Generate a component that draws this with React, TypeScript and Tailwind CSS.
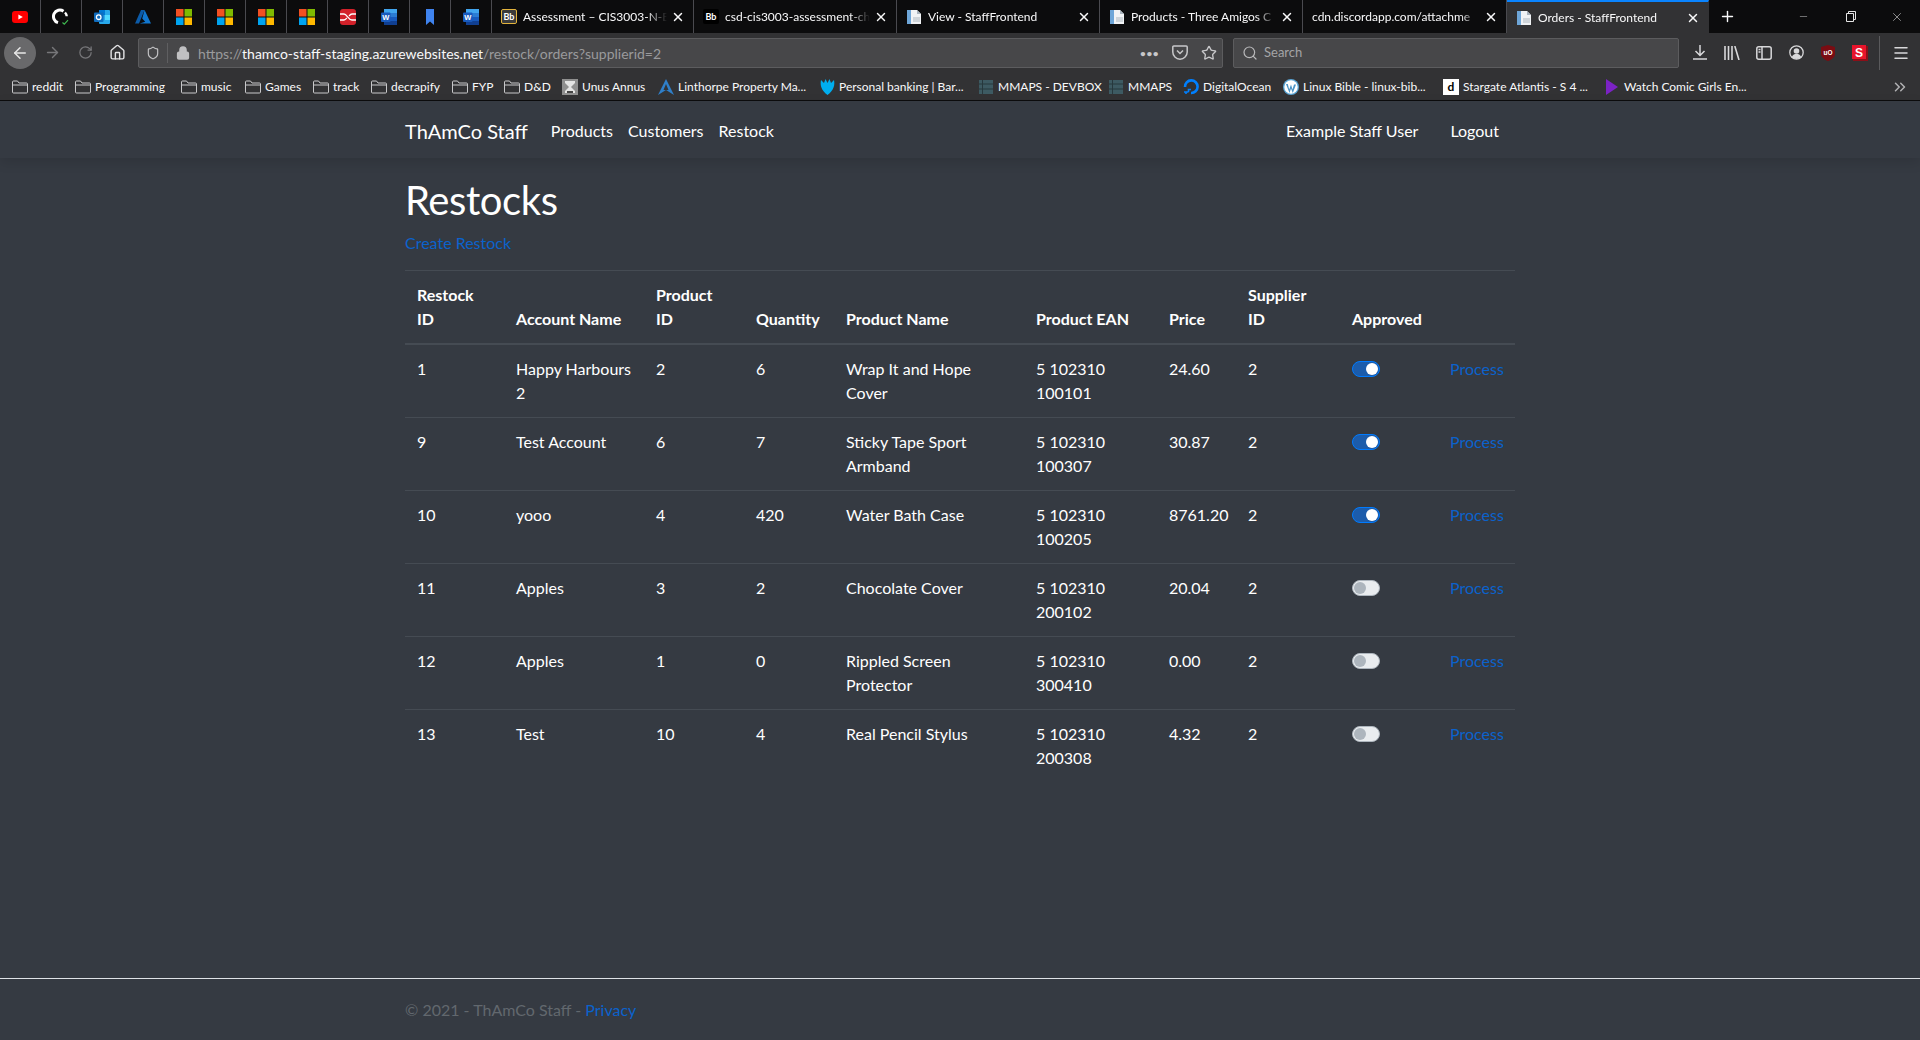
import { ArrowLeft, ArrowRight, ChevronsRight, Home, Lock, Menu, Minus, Plus, RotateCw, Search, Shield, Star, X } from 'lucide-react';
import type { ReactNode } from 'react';

const YouTube = () => (
  <svg width="16" height="12" viewBox="0 0 16 12">
    <rect width="16" height="12" rx="3" fill="#f00" />
    <path d="M6.4 3.4 10.8 6 6.4 8.6z" fill="#fff" />
  </svg>
);

const GitCheck = () => (
  <svg width="18" height="18" viewBox="0 0 18 18" fill="none">
    <path d="M11.5 3.2A6.4 6.4 0 1 0 6 14.6" stroke="#fff" strokeWidth="3" />
    <path d="M13 4.5c1.200 1.200 1.700 2.400 1.700 3.800" stroke="#fff" strokeWidth="2.400" />
    <path d="M10.500 14.500 12.300 16.200 16 12.200" stroke="#3fb950" strokeWidth="1.200" />
  </svg>
);

const Outlook = () => (
  <svg width="16" height="16" viewBox="0 0 16 16">
    <rect x="5" y="1" width="11" height="14" rx="1" fill="#28a8ea" />
    <rect x="5" y="1" width="6" height="5" fill="#0078d4" />
    <rect x="11" y="6" width="5" height="5" fill="#50d9ff" />
    <rect y="3.500" width="9.500" height="9.500" rx="1" fill="#0f6cbd" />
    <circle cx="4.700" cy="8.200" r="2.300" fill="none" stroke="#fff" strokeWidth="1.300" />
  </svg>
);

const Azure = () => (
  <svg width="16" height="14" viewBox="0 0 16 14">
    <path d="M6 0h3.600L4 13.500H0z" fill="#0c5ba8" />
    <path d="M9.600 0 16 13.500H4.800l5.400-1.700-3-3.400z" fill="#1177cf" />
  </svg>
);

const Microsoft = () => (
  <svg width="16" height="16" viewBox="0 0 16 16">
    <rect width="7.500" height="7.500" fill="#f25022" />
    <rect x="8.500" width="7.500" height="7.500" fill="#7fba00" />
    <rect y="8.500" width="7.500" height="7.500" fill="#00a4ef" />
    <rect x="8.500" y="8.500" width="7.500" height="7.500" fill="#ffb900" />
  </svg>
);

const RedSwitch = () => (
  <svg width="16" height="16" viewBox="0 0 16 16" fill="none">
    <rect width="16" height="16" rx="3" fill="#d3212a" />
    <path d="M0 5h4c3 0 4 6 8 6h4M0 11h4c1.500 0 2-1 2.800-2M9 7c.8-1 1.500-2 3-2h4" stroke="#fff" strokeWidth="1.300" />
  </svg>
);

const Word = () => (
  <svg width="16" height="16" viewBox="0 0 16 16">
    <rect x="3" y="0" width="13" height="16" rx="1" fill="#2b7cd3" />
    <rect x="3" y="0" width="13" height="4" fill="#41a5ee" />
    <rect x="3" y="8" width="13" height="4" fill="#185abd" />
    <rect x="3" y="12" width="13" height="4" fill="#103f91" />
    <rect x="0" y="3.500" width="9.500" height="9.500" rx="1" fill="#185abd" />
    <text x="4.700" y="11" fontSize="7.500" fontWeight="700" fill="#fff" textAnchor="middle" fontFamily="Liberation Sans">W</text>
  </svg>
);

const BookmarkBlue = () => (
  <svg width="8" height="16" viewBox="0 0 8 16">
    <path d="M0 0h8v16L4 12.500 0 16z" fill="#3f83ee" />
  </svg>
);

const Blackboard = ({ framed }: { framed?: boolean }) => (
  <div className={`flex h-[15px] w-[16px] items-center justify-center rounded-[2px] text-[9px] font-bold text-white ${framed ? 'border border-[#e2b33c] bg-[#3a3a3a]' : 'bg-black'}`}>
    Bb
  </div>
);

const Page = () => (
  <svg width="16" height="16" viewBox="0 0 16 16">
    <path d="M1 1h10l4 4v10H1z" fill="#f1f3f5" />
    <path d="M1 1h4v14H1z" fill="#6ea6d8" />
    <path d="M11 1l4 4h-4z" fill="#a9b4be" />
    <path d="M7 8h7v5H7z" fill="#cfd5da" />
  </svg>
);

const Folder = () => (
  <svg width="16" height="14" viewBox="0 0 16 14" fill="none" className="shrink-0">
    <path d="M.5 12V2A1 1 0 0 1 1.500 1h4l1.500 2h7.500a1 1 0 0 1 1 1v8a1 1 0 0 1-1 1h-13a1 1 0 0 1-1-1zM.5 5h15" stroke="#c8c8ca" />
  </svg>
);

const Hourglass = () => (
  <svg width="16" height="16" viewBox="0 0 16 16" className="shrink-0">
    <rect width="16" height="16" fill="#8f8f8f" />
    <path d="M3 2h10v2L9 8l4 4v2H3v-2l4-4-4-4z" fill="#e4e4e4" />
    <path d="M5 12h6v2H5z" fill="#444" />
  </svg>
);

const Linthorpe = () => (
  <svg width="16" height="16" viewBox="0 0 16 16" className="shrink-0">
    <path d="M8 0 16 16 8 11 0 16z" fill="#2f7fc9" />
    <path d="M8 5 10.500 11H5.500z" fill="#323234" />
  </svg>
);

const Eagle = () => (
  <svg width="15" height="16" viewBox="0 0 15 16" className="shrink-0">
    <path d="M1 1 4 4 5.500 0 7.500 4 9.500 0 11 4 14 1c1 5 0 10-6.500 15C1 11 0 6 1 1z" fill="#00aeef" />
  </svg>
);

const Mmaps = () => (
  <svg width="14" height="14" viewBox="0 0 14 14" className="shrink-0">
    <rect width="14" height="14" fill="#3d5a62" />
    <path d="M3.500 0v14M0 4h14M0 9h14" stroke="#27383d" />
  </svg>
);

const DigitalOcean = () => (
  <svg width="16" height="16" viewBox="0 0 16 16" fill="none" className="shrink-0">
    <path d="M8 14A6.300 6.300 0 1 0 2 8" stroke="#0080ff" strokeWidth="2.600" />
    <path d="M8 10.500H5.500V13M5.500 13H3v2M3 13H1" stroke="#0080ff" strokeWidth="1.600" />
  </svg>
);

const WordPress = () => (
  <svg width="16" height="16" viewBox="0 0 16 16" className="shrink-0">
    <circle cx="8" cy="8" r="8" fill="#5ba6d6" />
    <circle cx="8" cy="8" r="6.700" fill="#fff" />
    <path d="M3 5 6.500 14 8 9.500 9.800 14 13 5.500h-2l-1.500 5L8 5.500 6.200 10.500 4.800 5z" fill="#4a94c7" />
  </svg>
);

const DBadge = () => (
  <div className="flex h-4 w-4 shrink-0 items-center justify-center bg-white text-[12px] font-bold text-black">d</div>
);

const PurplePlay = () => (
  <svg width="12" height="16" viewBox="0 0 12 16" className="shrink-0">
    <path d="M0 0 12 8 0 16z" fill="#7b22c4" />
  </svg>
);

const pinned: ReactNode[] = [
  <YouTube />,
  <GitCheck />,
  <Outlook />,
  <Azure />,
  <Microsoft />,
  <Microsoft />,
  <Microsoft />,
  <Microsoft />,
  <RedSwitch />,
  <Word />,
  <BookmarkBlue />,
  <Word />,
];

const tabs = [
  { title: 'Assessment – CIS3003-N-BI', icon: <Blackboard framed />, w: 'w-[202px]', active: false },
  { title: 'csd-cis3003-assessment-ch', icon: <Blackboard />, w: 'w-[203px]', active: false },
  { title: 'View - StaffFrontend', icon: <Page />, w: 'w-[203px]', active: false },
  { title: 'Products - Three Amigos C', icon: <Page />, w: 'w-[203px]', active: false },
  { title: 'cdn.discordapp.com/attachme', icon: null, w: 'w-[204px]', active: false },
  { title: 'Orders - StaffFrontend', icon: <Page />, w: 'w-[202px]', active: true },
];

const bookmarks: { label: string; icon: ReactNode; w: string }[] = [
  { label: 'reddit', icon: <Folder />, w: 'w-[63px]' },
  { label: 'Programming', icon: <Folder />, w: 'w-[106px]' },
  { label: 'music', icon: <Folder />, w: 'w-[64px]' },
  { label: 'Games', icon: <Folder />, w: 'w-[68px]' },
  { label: 'track', icon: <Folder />, w: 'w-[58px]' },
  { label: 'decrapify', icon: <Folder />, w: 'w-[81px]' },
  { label: 'FYP', icon: <Folder />, w: 'w-[52px]' },
  { label: 'D&D', icon: <Folder />, w: 'w-[58px]' },
  { label: 'Unus Annus', icon: <Hourglass />, w: 'w-[96px]' },
  { label: 'Linthorpe Property Ma...', icon: <Linthorpe />, w: 'w-[161px]' },
  { label: 'Personal banking | Bar...', icon: <Eagle />, w: 'w-[159px]' },
  { label: 'MMAPS - DEVBOX', icon: <Mmaps />, w: 'w-[130px]' },
  { label: 'MMAPS', icon: <Mmaps />, w: 'w-[75px]' },
  { label: 'DigitalOcean', icon: <DigitalOcean />, w: 'w-[100px]' },
  { label: 'Linux Bible - linux-bib...', icon: <WordPress />, w: 'w-[160px]' },
  { label: 'Stargate Atlantis - S 4 ...', icon: <DBadge />, w: 'w-[161px]' },
  { label: 'Watch Comic Girls En...', icon: <PurplePlay />, w: 'w-[150px]' },
];

const rows = [
  { id: 1, account: 'Happy Harbours 2', product: 2, qty: 6, name: 'Wrap It and Hope Cover', ean: '5 102310 100101', price: '24.60', on: true },
  { id: 9, account: 'Test Account', product: 6, qty: 7, name: 'Sticky Tape Sport Armband', ean: '5 102310 100307', price: '30.87', on: true },
  { id: 10, account: 'yooo', product: 4, qty: 420, name: 'Water Bath Case', ean: '5 102310 100205', price: '8761.20', on: true },
  { id: 11, account: 'Apples', product: 3, qty: 2, name: 'Chocolate Cover', ean: '5 102310 200102', price: '20.04', on: false },
  { id: 12, account: 'Apples', product: 1, qty: 0, name: 'Rippled Screen Protector', ean: '5 102310 300410', price: '0.00', on: false },
  { id: 13, account: 'Test', product: 10, qty: 4, name: 'Real Pencil Stylus', ean: '5 102310 200308', price: '4.32', on: false },
];

function Toggle({ on }: { on: boolean }) {
  return (
    <div className={`mt-1 flex h-4 w-7 items-center rounded-full border px-[1px] ${on ? 'justify-end border-[#007bff] bg-[#1c5cab]' : 'justify-start border-[#adb5bd] bg-[#e9ecef]'}`}>
      <div className={`h-3 w-3 rounded-full ${on ? 'bg-white' : 'bg-[#adb5bd]'}`} />
    </div>
  );
}

function BrowserChrome() {
  return (
    <div className="shrink-0 text-[12px] text-[#f9f9fa]">
      <div className="flex h-[33px] items-stretch bg-[#0c0c0d]">
        {pinned.map((icon, i) => (
          <div key={i} className="flex w-[41px] items-center justify-center border-r border-[#4a4a4f]">
            {icon}
          </div>
        ))}
        {tabs.map((t) => (
          <div
            key={t.title}
            className={`flex items-center border-r pl-[9px] pr-2 ${t.w} ${t.active ? 'border-t-2 border-r-transparent border-t-[#0a84ff] bg-[#323234]' : 'border-[#4a4a4f]'}`}
          >
            {t.icon && <div className="mr-[6px] flex w-4 shrink-0 justify-center">{t.icon}</div>}
            <span className="flex-1 overflow-hidden whitespace-nowrap [mask-image:linear-gradient(to_left,transparent,black_20px)]">{t.title}</span>
            <X size={14} strokeWidth={2.5} className="ml-1 shrink-0" />
          </div>
        ))}
        <div className="flex w-[36px] items-center justify-center">
          <Plus size={17} strokeWidth={2} />
        </div>
        <div className="ml-auto flex items-center text-[#e6e6e6]">
          <div className="flex w-[47px] justify-center">
            <Minus size={11} strokeWidth={1} />
          </div>
          <div className="flex w-[47px] justify-center">
            <svg width="10" height="11" viewBox="0 0 10 11" fill="none" stroke="#e6e6e6">
              <path d="M.5 2.500h7v8h-7zM2.500 2.500v-2h7v8h-2" />
            </svg>
          </div>
          <div className="flex w-[46px] justify-center">
            <X size={14} strokeWidth={1} />
          </div>
        </div>
      </div>

      <div className="flex h-[39px] items-center bg-[#323234] text-[#b1b1b3]">
        <div className="ml-1 flex h-8 w-8 items-center justify-center rounded-full bg-[#69696b] text-[#e8e8e8]">
          <ArrowLeft size={18} strokeWidth={2} />
        </div>
        <div className="ml-[7px] flex w-[18px] justify-center text-[#77777a]">
          <ArrowRight size={17} strokeWidth={2} />
        </div>
        <div className="ml-[15px] flex w-[18px] justify-center text-[#77777a]">
          <RotateCw size={15} strokeWidth={2} />
        </div>
        <div className="ml-[14px] flex w-[18px] justify-center text-[#e2e2e4]">
          <Home size={17} strokeWidth={2} />
        </div>
        <div className="ml-[12px] flex h-[30px] w-[1085px] items-center rounded-[2px] border border-[#5c5c5e] bg-[#474749]">
          <div className="flex w-[28px] justify-center text-[#c4c4c6]">
            <Shield size={14} strokeWidth={2} />
          </div>
          <div className="h-5 w-px bg-[#5f5f61]" />
          <Lock size={14} strokeWidth={3} className="ml-[8px] text-[#c0c0c2]" fill="#c0c0c2" />
          <div className="ml-[8px] flex-1 whitespace-nowrap pt-px text-[14px] text-[#9a9a9c]">
            https://<span className="text-[#f9f9fa]">thamco-staff-staging.azurewebsites.net</span>/restock/orders?supplierid=2
          </div>
          <div className="flex items-center gap-[13px] pr-[5px] text-[#c8c8ca]">
            <span className="text-[10px] font-bold leading-none tracking-[0.5px]">•••</span>
            <svg width="16" height="15" viewBox="0 0 16 15" fill="none" stroke="#c8c8ca" strokeWidth="1.500">
              <path d="M1.800 1h12.400a1 1 0 0 1 1 1v5a7.200 7.200 0 0 1-14.400 0V2a1 1 0 0 1 1-1z" />
              <path d="M5 5.500 8 8.500 11 5.500" />
            </svg>
            <Star size={16} strokeWidth={2} />
          </div>
        </div>
        <div className="ml-[10px] flex h-[30px] w-[446px] items-center rounded-[2px] border border-[#5c5c5e] bg-[#474749] pl-2">
          <Search size={16} strokeWidth={1.800} className="text-[#b8b8ba]" />
          <span className="ml-[6px] pt-px text-[13px] text-[#a4a4a6]">Search</span>
        </div>
        <div className="ml-[5px] flex items-center text-[#d8d8da]">
          <div className="flex w-[32px] justify-center">
            <svg width="14" height="15" viewBox="0 0 14 15" fill="none" stroke="currentColor" strokeWidth="1.500">
              <path d="M7 0v10M2.500 6 7 10.500 11.500 6M0 14h14" />
            </svg>
          </div>
          <div className="flex w-[32px] justify-center">
            <svg width="16" height="14" viewBox="0 0 16 14" fill="none" stroke="currentColor" strokeWidth="1.600">
              <path d="M1 0v14M4.500 0v14M8 0v14M10.800 0 15 14" />
            </svg>
          </div>
          <div className="flex w-[32px] justify-center">
            <svg width="16" height="14" viewBox="0 0 16 14" fill="none" stroke="currentColor" strokeWidth="1.500">
              <rect x=".8" y=".8" width="14.400" height="12.400" rx="2" />
              <path d="M6 1v12M2.500 3.500h2M2.500 6h2" />
            </svg>
          </div>
          <div className="flex w-[32px] justify-center">
            <svg width="15" height="15" viewBox="0 0 15 15" fill="none">
              <circle cx="7.500" cy="7.500" r="6.700" stroke="currentColor" strokeWidth="1.300" />
              <circle cx="7.500" cy="6" r="2.800" fill="currentColor" />
              <path d="M2.800 12c1-2.500 2.800-3 4.700-3s3.700.5 4.700 3a6.500 6.500 0 0 1-9.400 0z" fill="currentColor" />
            </svg>
          </div>
          <div className="flex w-[32px] justify-center">
            <svg width="14" height="16" viewBox="0 0 14 16">
              <path d="M7 0 14 2v7c0 3-3 5.500-7 7-4-1.500-7-4-7-7V2z" fill="#7a0c12" />
              <text x="7" y="10" fontSize="6.500" fontWeight="700" fill="#fff" textAnchor="middle" fontFamily="Liberation Sans">uO</text>
            </svg>
          </div>
          <div className="flex w-[32px] justify-center">
            <svg width="16" height="16" viewBox="0 0 16 16">
              <rect x="1" y="1" width="15" height="15" fill="#8c0f18" />
              <rect width="14" height="14" fill="#e8142b" />
              <text x="7" y="11.500" fontSize="12" fontWeight="700" fill="#fff" textAnchor="middle" fontFamily="Liberation Sans">S</text>
            </svg>
          </div>
          <div className="ml-[3px] h-[34px] w-px bg-[#5a5a5c]" />
          <Menu size={18} strokeWidth={2} className="ml-[12px] text-[#d8d8da]" />
        </div>
      </div>

      <div className="flex h-[29px] items-center border-b border-[#0c0c0d] bg-[#323234] pl-3 pt-[2px]">
        {bookmarks.map((b) => (
          <div key={b.label} className={`flex items-center gap-1 whitespace-nowrap ${b.w}`}>
            <div className="flex w-4 justify-center">{b.icon}</div>
            <span>{b.label}</span>
          </div>
        ))}
        <ChevronsRight size={18} strokeWidth={2} className="ml-auto mr-[11px] text-[#b1b1b3]" />
      </div>
    </div>
  );
}

export default function App() {
  return (
    <div className="flex h-[1040px] flex-col overflow-hidden bg-[#353a42] font-['Lato',sans-serif] text-white">
      <BrowserChrome />

      <nav className="z-10 flex h-[57px] shrink-0 justify-center bg-[#353a42] shadow-[0_4px_12px_rgba(0,0,0,0.12)]">
        <div className="flex w-[1110px] items-center pt-[3px] text-[16px]">
          <a className="mr-[23px] text-[20px]">ThAmCo Staff</a>
          <div className="flex gap-[15px]">
            <a>Products</a>
            <a>Customers</a>
            <a>Restock</a>
          </div>
          <div className="ml-auto flex gap-8 pr-4">
            <a>Example Staff User</a>
            <a>Logout</a>
          </div>
        </div>
      </nav>

      <main className="flex flex-1 justify-center pt-[18px]">
        <div className="w-[1110px]">
          <h1 className="text-[40px] leading-[48px] tracking-[-0.4px]">Restocks</h1>
          <p className="mt-[7px] text-[16px] leading-6">
            <a className="text-[#0b62cc]">Create Restock</a>
          </p>
          <table className="mt-[15px] w-full table-fixed border-collapse text-[16px] leading-6">
            <colgroup>
              <col className="w-[99px]" />
              <col className="w-[140px]" />
              <col className="w-[100px]" />
              <col className="w-[90px]" />
              <col className="w-[190px]" />
              <col className="w-[133px]" />
              <col className="w-[79px]" />
              <col className="w-[104px]" />
              <col className="w-[98px]" />
              <col className="w-[77px]" />
            </colgroup>
            <thead>
              <tr className="border-t border-b-2 border-t-[#454b53] border-b-[#454b53] text-left align-bottom">
                <th className="p-3 font-bold">Restock<br />ID</th>
                <th className="p-3 font-bold">Account Name</th>
                <th className="p-3 font-bold">Product<br />ID</th>
                <th className="p-3 font-bold">Quantity</th>
                <th className="p-3 font-bold">Product Name</th>
                <th className="p-3 font-bold">Product EAN</th>
                <th className="p-3 font-bold">Price</th>
                <th className="p-3 font-bold">Supplier<br />ID</th>
                <th className="p-3 font-bold">Approved</th>
                <th className="p-3" />
              </tr>
            </thead>
            <tbody>
              {rows.map((r) => (
                <tr key={r.id} className="h-[73px] border-b border-[#454b53] align-top last:border-b-0">
                  <td className="p-3">{r.id}</td>
                  <td className="p-3">{r.account}</td>
                  <td className="p-3">{r.product}</td>
                  <td className="p-3">{r.qty}</td>
                  <td className="p-3 pr-6">{r.name}</td>
                  <td className="p-3">{r.ean}</td>
                  <td className="py-3 pl-3">{r.price}</td>
                  <td className="p-3">2</td>
                  <td className="p-3">
                    <Toggle on={r.on} />
                  </td>
                  <td className="py-3 pl-3 text-[#0b62cc]">Process</td>
                </tr>
              ))}
            </tbody>
          </table>
        </div>
      </main>

      <footer className="flex h-[62px] shrink-0 justify-center border-t border-[#dee2e6] pt-[19px]">
        <div className="w-[1110px] text-[16px] leading-6 text-[#62686e]">
          © 2021 - ThAmCo Staff - <a className="text-[#0b62cc]">Privacy</a>
        </div>
      </footer>
    </div>
  );
}
